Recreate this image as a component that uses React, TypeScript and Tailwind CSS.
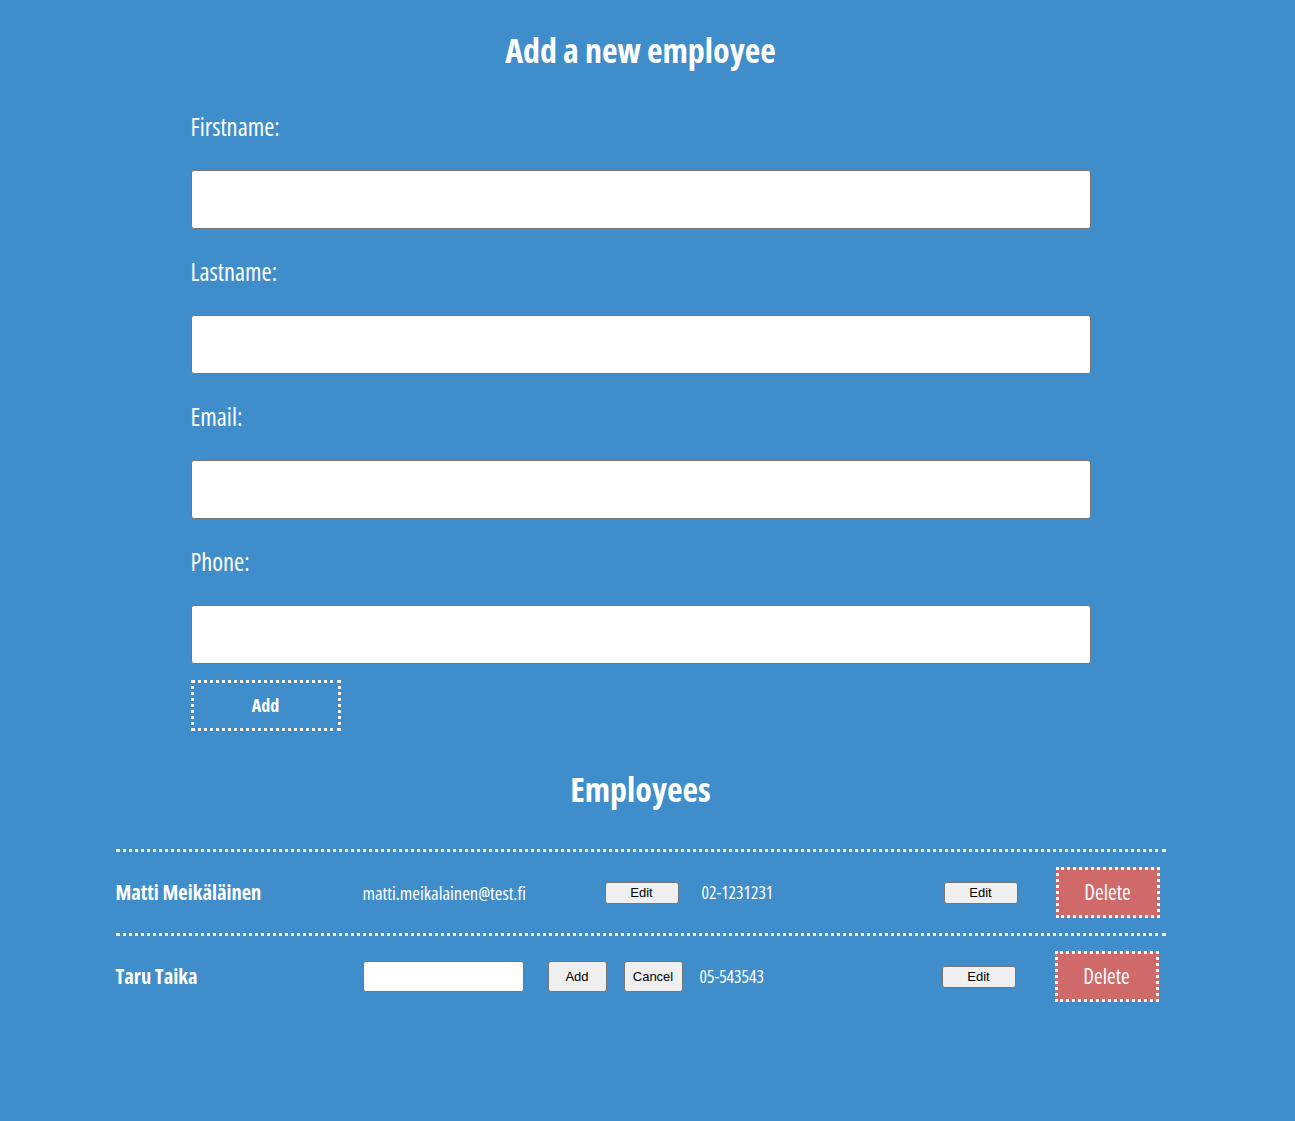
import React from "react";

const F = { fontFamily: '"Open Sans", "DejaVu Sans Condensed", sans-serif' };
const NB = { fontFamily: '"Liberation Sans", Arial, sans-serif' };

function Field({ label }: { label: string }) {
  return (
    <div className="flex flex-col">
      <label className="mt-[28px] mb-[28px] block h-[30px] text-[24.5px] leading-[30px] text-white">{label}</label>
      <input className="h-[59px] w-full rounded-[3px] border border-[#767676] bg-white" />
    </div>
  );
}

function NativeBtn({ children, w, h }: { children: React.ReactNode; w: string; h: string }) {
  return (
    <button className={`${w} ${h} shrink-0 rounded-[3px] border border-[#767676] bg-[#efefef] text-[13px] text-black font-stretch-normal`} style={NB}>
      {children}
    </button>
  );
}

function DeleteBtn() {
  return (
    <button className="h-[51px] w-[104px] shrink-0 border-[3px] border-dotted border-white bg-[#d06a6a] text-[21px] text-white font-stretch-condensed">
      Delete
    </button>
  );
}

export default function App() {
  return (
    <div className="min-h-[1121px] w-full bg-[#408dcc] font-stretch-condensed" style={F}>
      <div className="w-[1281px] pt-[28px]">
        <h1 className="h-[44px] text-center text-[34px] leading-[44px] font-bold text-white">Add a new employee</h1>
        <div className="mx-auto mt-[12px] w-[900px]">
          <Field label="Firstname:" />
          <Field label="Lastname:" />
          <Field label="Email:" />
          <Field label="Phone:" />
          <button className="mt-[16px] h-[51px] w-[150px] border-[3px] border-dotted border-white text-[18px] font-bold text-white font-stretch-condensed">Add</button>
        </div>
        <h2 className="mt-[36px] h-[44px] text-center text-[34px] leading-[44px] font-bold text-white">Employees</h2>
        <div className="mx-auto mt-[38px] w-[1050px]">
          <div className="flex h-[84px] items-center border-t-[3px] border-dotted border-white">
            <div className="w-[247px] shrink-0 text-[20.5px] font-bold text-white">Matti Meikäläinen</div>
            <div className="w-[242px] shrink-0 text-[18.5px] text-white">matti.meikalainen@test.fi</div>
            <NativeBtn w="w-[74px]" h="h-[22px]">Edit</NativeBtn>
            <div className="ml-[23px] w-[242px] shrink-0 text-[17.5px] text-white">02-1231231</div>
            <NativeBtn w="w-[74px]" h="h-[22px]">Edit</NativeBtn>
            <div className="ml-[38px]"><DeleteBtn /></div>
          </div>
          <div className="flex h-[84px] items-center border-t-[3px] border-dotted border-white">
            <div className="w-[247px] shrink-0 text-[20.5px] font-bold text-white">Taru Taika</div>
            <input className="h-[31px] w-[161px] shrink-0 rounded-[3px] border border-[#767676] bg-white" />
            <div className="ml-[24px]"><NativeBtn w="w-[59px]" h="h-[31px]">Add</NativeBtn></div>
            <div className="ml-[17px]"><NativeBtn w="w-[59px]" h="h-[31px]">Cancel</NativeBtn></div>
            <div className="ml-[17px] w-[242px] shrink-0 text-[17.5px] text-white">05-543543</div>
            <NativeBtn w="w-[74px]" h="h-[22px]">Edit</NativeBtn>
            <div className="ml-[39px]"><DeleteBtn /></div>
          </div>
        </div>
      </div>
    </div>
  );
}
